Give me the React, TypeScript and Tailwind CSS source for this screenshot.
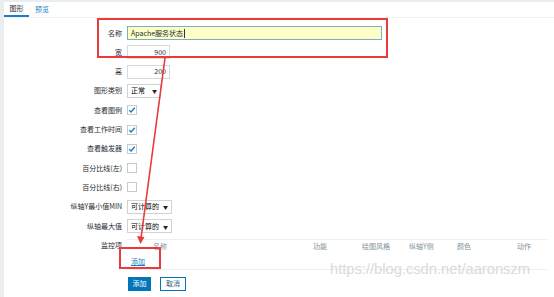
import React from "react";

const font = { fontFamily: '"Noto Sans CJK SC", "Liberation Sans", sans-serif' };

function Label({ children }: { children: React.ReactNode }) {
  return <div className="w-[118px] shrink-0 text-right pr-[0px] text-[#1f2c33]">{children}</div>;
}

function Row({ label, children }: { label: string; children?: React.ReactNode }) {
  return (
    <div className="flex items-center gap-[5px] h-[19.3px]">
      <Label>{label}</Label>
      {children}
    </div>
  );
}

function Check({ on }: { on?: boolean }) {
  return (
    <div className="w-[10px] h-[10px] border border-[#c5ccd0] bg-white flex items-center justify-center">
      {on && (
        <svg width="8" height="8" viewBox="0 0 8 8">
          <path d="M1.2 4.2 L3.1 6 L6.8 1.8" fill="none" stroke="#1a7fc4" strokeWidth="1.4" />
        </svg>
      )}
    </div>
  );
}

function Select({ value, w }: { value: string; w: string }) {
  return (
    <div className={`${w} h-[14px] border border-[#cdd3d7] bg-white flex items-center justify-between px-[3px]`}>
      <span>{value}</span>
      <span className="text-[5px] text-[#222]">▼</span>
    </div>
  );
}

export default function App() {
  return (
    <div className="relative w-[554px] h-[297px] overflow-hidden bg-[#ebeef0] pl-[4px] pt-[2px] text-[7px] leading-none" style={font}>
      <div className="bg-white h-full">
        <div className="h-[16px] flex items-end border-b border-[#f1f2f3]">
          <div className="w-[25px] h-full flex items-center justify-center text-[#1f2c33] border-b-2 border-[#1a7fc4]">图形</div>
          <div className="ml-[6px] h-full flex items-center text-[#1a7fc4]">预览</div>
        </div>
        <div className="pt-[5.4px]">
          <Row label="名称">
            <div className="w-[255px] h-[14px] border border-[#7aaec4] bg-[#fdffc6] flex items-center px-[3px] text-[#1f2c33]">
              Apache服务状态<span className="w-px h-[9px] bg-[#333] ml-px" />
            </div>
          </Row>
          <Row label="宽">
            <div className="w-[43px] h-[14px] border border-[#d4dadd] flex items-center justify-end px-[3px] text-[#1f2c33]">900</div>
          </Row>
          <Row label="高">
            <div className="w-[43px] h-[14px] border border-[#d4dadd] flex items-center justify-end px-[3px] text-[#1f2c33]">200</div>
          </Row>
          <Row label="图形类别">
            <Select value="正常" w="w-[34px]" />
          </Row>
          <Row label="查看图例"><Check on /></Row>
          <Row label="查看工作时间"><Check on /></Row>
          <Row label="查看触发器"><Check on /></Row>
          <Row label="百分比线(左)"><Check /></Row>
          <Row label="百分比线(右)"><Check /></Row>
          <Row label="纵轴Y最小值MIN">
            <Select value="可计算的" w="w-[45px]" />
          </Row>
          <Row label="纵轴最大值">
            <Select value="可计算的" w="w-[45px]" />
          </Row>
          <div className="flex gap-[5px] mt-[3px]">
            <div className="w-[118px] shrink-0 text-right text-[#1f2c33] pt-[3px]">监控项</div>
            <div className="w-[420px] border-t border-b border-[#eceff1]">
              <div className="grid grid-cols-[26px_160px_49px_47px_48px_60px_1fr] h-[14px] items-center text-[#7e929c]">
                <div />
                <div>名称</div>
                <div>功能</div>
                <div>绘图风格</div>
                <div>纵轴Y侧</div>
                <div>颜色</div>
                <div>动作</div>
              </div>
              <div className="h-[15px] flex items-center pl-[4px]">
                <span className="text-[#1a7fc4] underline">添加</span>
              </div>
            </div>
          </div>
          <div className="flex gap-[9px] ml-[124px] mt-[7px]">
            <div className="w-[23px] h-[14px] bg-[#0275b8] text-white flex items-center justify-center">添加</div>
            <div className="w-[26px] h-[14px] border border-[#0275b8] text-[#1f5f85] bg-white flex items-center justify-center">取消</div>
          </div>
        </div>
      </div>

      {/* annotations */}
      <div className="absolute left-[97px] top-[18px] w-[291px] h-[40px] border-2 border-[#ea3b3b]" />
      <div className="absolute left-[119px] top-[247px] w-[42px] h-[22px] border-2 border-[#ea3b3b]" />
      <svg className="absolute left-0 top-0" width="554" height="297">
        <line x1="165" y1="58" x2="141" y2="238" stroke="#ea3b3b" strokeWidth="1.6" />
        <polygon points="140.5,244 137,236 144.5,237" fill="#ea3b3b" />
      </svg>
      <div
        className="absolute left-[330px] top-[262px] text-[14.7px] text-[#d8dadc]"
        style={{ fontFamily: '"Liberation Sans", sans-serif' }}
      >
        https://blog.csdn.net/aaronszm
      </div>
    </div>
  );
}
